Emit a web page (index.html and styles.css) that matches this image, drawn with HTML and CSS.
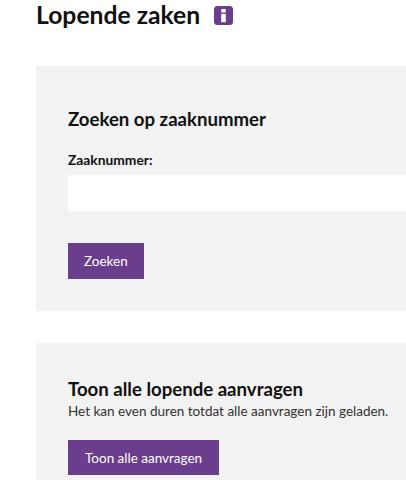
FILE: index.html
```html
<!DOCTYPE html>
<html lang="en">
<head>
    <title>Lopende zaken</title>
    <link rel="stylesheet" href="styles.css">
</head>
<body>
    <div class="page">
        <h1 class="title">Lopende zaken
            <svg class="info" width="19" height="19" viewBox="0 0 19 19">
                <rect width="19" height="19" rx="3.5" fill="#6b3d8d"/>
                <rect x="7.2" y="3" width="4.6" height="3.6" rx="1" fill="#fff"/>
                <rect x="7.2" y="7.8" width="4.6" height="8.4" fill="#fff"/>
            </svg>
        </h1>
        <div class="panel search">
            <h2>Zoeken op zaaknummer</h2>
            <label for="nr">Zaaknummer:</label>
            <input type="text" id="nr">
            <button type="button">Zoeken</button>
        </div>
        <div class="panel all">
            <h2>Toon alle lopende aanvragen</h2>
            <p>Het kan even duren totdat alle aanvragen zijn geladen.</p>
            <button type="button">Toon alle aanvragen</button>
        </div>
    </div>
</body>
</html>
```

FILE: styles.css
```css
html, body {
    margin: 0;
    height: 480px;
    overflow: hidden;
    background: #fff;
}
.page {
    padding-left: 36px;
    font-family: "Lato", "Liberation Sans", sans-serif;
    color: #111;
}
.title {
    display: flex;
    align-items: center;
    gap: 13.5px;
    margin: 0;
    height: 66px;
    padding-bottom: 37px;
    box-sizing: border-box;
    font-size: 24.7px;
    line-height: 29px;
    font-weight: 700;
}
.info { flex: none; margin-top: 2px; }
.panel {
    background: #f2f2f2;
    padding-left: 32px;
}
.search {
    height: 245px;
    padding-top: 41px;
    box-sizing: border-box;
    margin-bottom: 32px;
}
.all {
    height: 137px;
    padding-top: 34px;
    box-sizing: border-box;
}
h2 {
    margin: 0;
    font-size: 18.6px;
    line-height: 24px;
    font-weight: 700;
}
label {
    display: block;
    margin-top: 20px;
    font-size: 13.8px;
    line-height: 18px;
    font-weight: 700;
}
input {
    display: block;
    width: 100%;
    height: 36px;
    margin-top: 6px;
    border: none;
    padding: 0;
    background: #fff;
}
p {
    margin: 0;
    font-size: 13.5px;
    line-height: 20px;
    color: #333;
}
button {
    display: block;
    height: 36px;
    padding: 0 16px;
    border: none;
    background: #6b3d8d;
    color: #fff;
    font-family: inherit;
    font-size: 13.5px;
}
.search button { margin-top: 32px; }
.all button { margin-top: 19px; height: 35px; padding: 0 17px; }
```
